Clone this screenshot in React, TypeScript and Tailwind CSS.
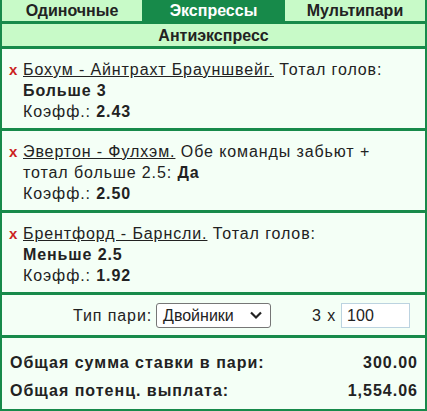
const items = [
  { match: "Бохум - Айнтрахт Брауншвейг.", market: "Тотал голов:", pick: "Больше 3", inline: false, odds: "2.43" },
  { match: "Эвертон - Фулхэм.", market: "Обе команды забьют +", market2: "тотал больше 2.5:", pick: "Да", inline: true, odds: "2.50" },
  { match: "Брентфорд - Барнсли.", market: "Тотал голов:", pick: "Меньше 2.5", inline: false, odds: "1.92" },
]

export default function App() {
  return (
    <div className="w-[427px] h-[411px] bg-[#f4fff6] text-[#222] text-[16px] leading-[21px] font-['Liberation_Sans',Arial,sans-serif] border-x-2 border-b-2 border-[#178a4a] flex flex-col">
      <div className="flex h-[24px] border-b-[3px] border-[#178a4a] text-[16px] font-bold">
        <div className="flex-1 bg-[#c8fac8] flex items-center justify-center">Одиночные</div>
        <div className="w-[143px] bg-[#178a4a] text-white flex items-center justify-center">Экспрессы</div>
        <div className="flex-1 bg-[#c8fac8] flex items-center justify-center">Мультипари</div>
      </div>
      <div className="h-[25px] bg-[#c8fac8] border-b-[3px] border-[#178a4a] flex items-center justify-center text-[16px] font-bold">
        Антиэкспресс
      </div>
      {items.map((it) => (
        <div key={it.match} className="flex pl-[7px] pt-[10px] pb-[6px] border-b-[3px] border-[#178a4a] tracking-[0.9px]">
          <span className="w-[14px] text-[#cc1f1f] font-bold text-[15px] tracking-normal">x</span>
          <div>
            <span className="underline">{it.match}</span> {it.market}
            <br />
            {it.inline ? (
              <>
                {it.market2} <b>{it.pick}</b>
              </>
            ) : (
              <b>{it.pick}</b>
            )}
            <br />
            Коэфф.: <b>{it.odds}</b>
          </div>
        </div>
      ))}
      <div className="h-[43px] flex items-center border-b-[3px] border-[#178a4a]">
        <span className="ml-[71px] tracking-[0.9px]">Тип пари:</span>
        <div className="ml-[4px] w-[115px] h-[25px] border border-[#767676] rounded-[3px] bg-white flex items-center justify-between pl-[6px] pr-[7px]">
          <span>Двойники</span>
          <svg width="14" height="10" viewBox="0 0 14 10" fill="none" stroke="#222" strokeWidth="2.2">
            <path d="M2 2.5l5 5 5-5" />
          </svg>
        </div>
        <span className="ml-[41px] tracking-[0.9px]">3 x</span>
        <div className="ml-[5px] w-[69px] h-[25px] border border-[#bcd3e0] bg-white flex items-center pl-[5px]">100</div>
      </div>
      <div className="flex-1 flex flex-col justify-center gap-[7px] pl-[8px] pr-[7px] pt-[6px] font-bold tracking-[1px]">
        <div className="flex justify-between">
          <span>Общая сумма ставки в пари:</span>
          <span>300.00</span>
        </div>
        <div className="flex justify-between">
          <span>Общая потенц. выплата:</span>
          <span>1,554.06</span>
        </div>
      </div>
    </div>
  )
}
